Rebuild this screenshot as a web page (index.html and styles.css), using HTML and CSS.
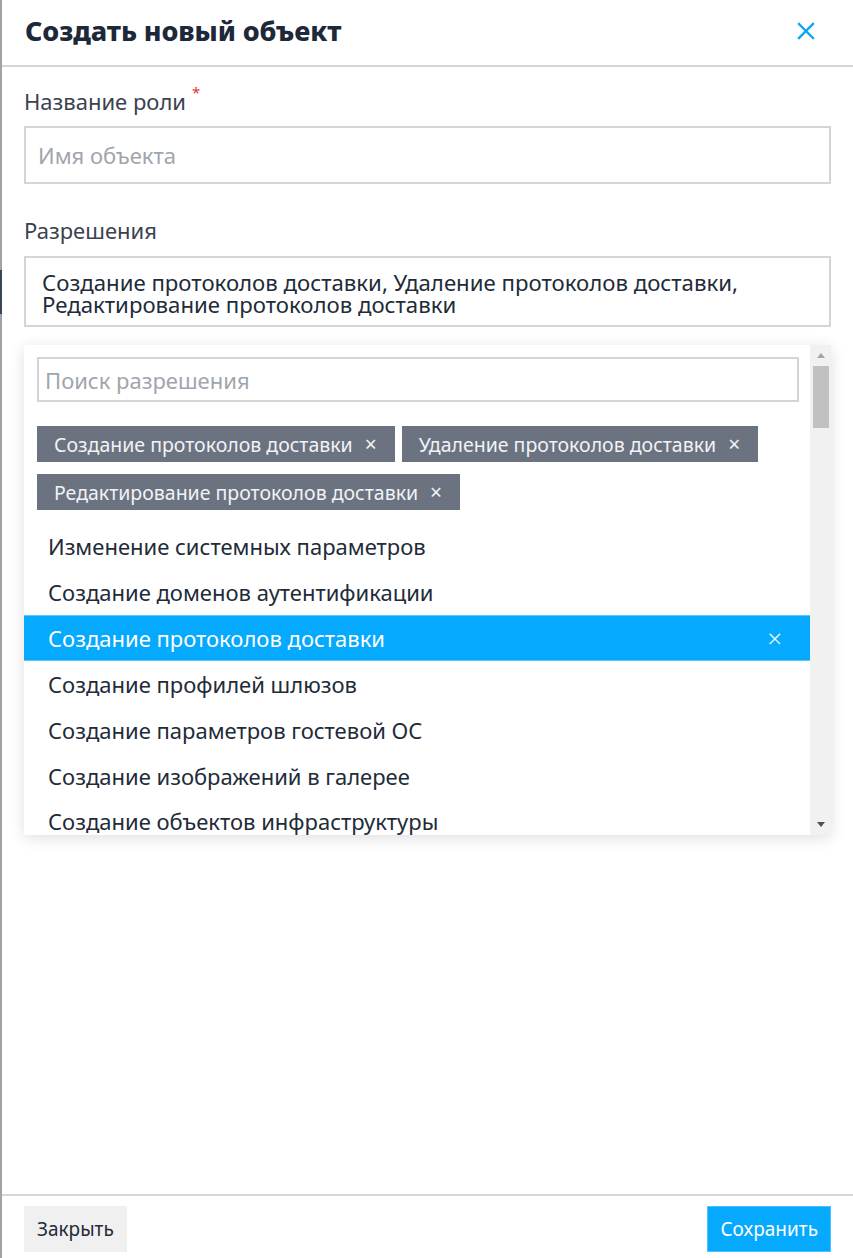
FILE: index.html
```html
<!DOCTYPE html>
<html lang="ru">
<head>
<meta charset="utf-8">
<title>Создать новый объект</title>
<link rel="stylesheet" href="styles.css">
</head>
<body>
<div class="edge-mark"></div>
<div class="modal">
  <header class="modal-header">
    <h1 class="modal-title">Создать новый объект</h1>
    <button class="close-btn" aria-label="Закрыть">
      <svg width="18" height="18" viewBox="0 0 18 18"><path d="M2 2 L16 16 M16 2 L2 16" stroke="#0aa5f5" stroke-width="2.4" stroke-linecap="square" fill="none"/></svg>
    </button>
  </header>
  <main class="modal-body">
    <label class="field-label">Название роли<span class="req">*</span></label>
    <div class="input placeholder">Имя объекта</div>

    <label class="field-label second">Разрешения</label>
    <div class="input multi">Создание протоколов доставки, Удаление протоколов доставки, Редактирование протоколов доставки</div>

    <div class="dropdown">
      <div class="dropdown-content">
        <div class="search">Поиск разрешения</div>
        <div class="tags">
          <span class="tag">Создание протоколов доставки<span class="tag-x">×</span></span>
          <span class="tag">Удаление протоколов доставки<span class="tag-x">×</span></span>
          <span class="tag">Редактирование протоколов доставки<span class="tag-x">×</span></span>
        </div>
        <ul class="options">
          <li class="option">Изменение системных параметров</li>
          <li class="option">Создание доменов аутентификации</li>
          <li class="option selected">Создание протоколов доставки<span class="opt-x">×</span></li>
          <li class="option">Создание профилей шлюзов</li>
          <li class="option">Создание параметров гостевой ОС</li>
          <li class="option">Создание изображений в галерее</li>
          <li class="option">Создание объектов инфраструктуры</li>
        </ul>
      </div>
      <div class="scrollbar">
        <span class="arrow up"></span>
        <span class="thumb"></span>
        <span class="track"></span>
        <span class="arrow down"></span>
      </div>
    </div>
  </main>
  <footer class="modal-footer">
    <button class="btn btn-secondary">Закрыть</button>
    <button class="btn btn-primary">Сохранить</button>
  </footer>
</div>
</body>
</html>
```

FILE: styles.css
```css
* { box-sizing: border-box; }
html, body { margin: 0; padding: 0; }
body {
  font-family: "Noto Sans", "Open Sans", "DejaVu Sans", sans-serif;
  background: #fff;
  color: #222b38;
  width: 853px;
  height: 1258px;
  overflow: hidden;
  position: relative;
}
.edge-mark {
  position: absolute;
  left: 0;
  top: 270px;
  width: 2px;
  height: 44px;
  background: #3a4656;
  z-index: 2;
}
.modal {
  height: 1258px;
  border-left: 2px solid #a2a2a2;
  display: flex;
  flex-direction: column;
}
.modal-header {
  height: 67px;
  border-bottom: 2px solid #d6d6d6;
  display: flex;
  align-items: center;
  justify-content: space-between;
  padding: 0 38px 4px 23px;
}
.modal-title {
  margin: 0;
  font-size: 27px;
  font-weight: 800;
  color: #1d2839;
  letter-spacing: -0.1px;
}
.close-btn {
  border: 0;
  background: none;
  padding: 0;
  width: 18px;
  height: 18px;
  display: flex;
}
.modal-body {
  flex: 1;
  padding: 20px 22px 0 22px;
  display: flex;
  flex-direction: column;
}
.field-label {
  display: block;
  font-size: 22px;
  line-height: 28px;
  color: #3a4250;
  margin-bottom: 11px;
}
.field-label.second { margin-top: 32px; margin-bottom: 12px; }
.req {
  position: relative;
  top: -12px;
  color: #f0303a;
  font-size: 15px;
  line-height: 0;
  margin-left: 6px;
}
.input {
  border: 2px solid #d5d5d5;
  min-height: 58px;
  padding: 0 12px;
  display: flex;
  align-items: center;
  font-size: 22px;
}
.placeholder { color: #a1a5ad; }
.input.multi {
  display: block;
  min-height: 71px;
  padding: 14px 16px 8px 16px;
  line-height: 22px;
  font-size: 22.2px;
  color: #222b38;
}
.dropdown {
  margin-top: 18px;
  height: 490px;
  display: flex;
  background: #fff;
  box-shadow: 0 3px 14px rgba(0, 0, 0, 0.13);
}
.dropdown-content {
  flex: 1;
  overflow: hidden;
  padding-top: 12px;
}
.search {
  margin: 0 11px 0 13px;
  height: 45px;
  border: 2px solid #d5d5d5;
  display: flex;
  align-items: center;
  padding: 0 6px;
  font-size: 22px;
  color: #a1a5ad;
}
.tags {
  margin: 24px 13px 0 13px;
  display: flex;
  flex-wrap: wrap;
  gap: 12px 7px;
}
.tag {
  background: #6b7280;
  color: #f1f3f6;
  height: 36px;
  display: inline-flex;
  align-items: center;
  padding: 0 18px 0 17px;
  font-size: 19.5px;
}
.tag-x {
  margin-left: 12px;
  font-size: 21px;
}
.options {
  list-style: none;
  margin: 13px 0 0 0;
  padding: 0;
}
.option {
  height: 46px;
  display: flex;
  align-items: center;
  justify-content: space-between;
  padding: 0 28px 0 24px;
  font-size: 22px;
  color: #222b38;
}
.option:last-child {
  height: 36px;
  align-items: flex-start;
  padding-top: 8px;
  line-height: 28px;
}
.option.selected {
  background: #05a9fd;
  color: #fff;
  border-top: 1px solid #5ac8ff;
  border-bottom: 1px solid #5ac8ff;
}
.opt-x {
  font-size: 26px;
  font-weight: 300;
  color: #e8f6ff;
}
.scrollbar {
  width: 21px;
  background: #f1f1f1;
  display: flex;
  flex-direction: column;
  align-items: center;
  padding: 6px 0 6px 0;
}
.arrow {
  width: 0;
  height: 0;
  border-left: 4px solid transparent;
  border-right: 4px solid transparent;
}
.arrow.up { border-bottom: 5px solid #a3a3a3; margin-top: 2px; }
.arrow.down { border-top: 5px solid #505050; margin-bottom: 2px; }
.thumb {
  width: 16px;
  height: 62px;
  background: #c1c1c1;
  margin-top: 8px;
}
.track { flex: 1; }
.modal-footer {
  height: 64px;
  border-top: 2px solid #d6d6d6;
  display: flex;
  justify-content: space-between;
  align-items: flex-start;
  padding: 10px 22px 0 22px;
}
.btn {
  border: 0;
  height: 46px;
  font-family: inherit;
  font-size: 19px;
  padding: 0 12px;
}
.btn-secondary { background: #f0f0f0; color: #222b38; padding: 0 13px; }
.btn-primary { background: #05a9fd; color: #fff; border: 1px solid #4cc3ff; padding: 0 12px; }
```
